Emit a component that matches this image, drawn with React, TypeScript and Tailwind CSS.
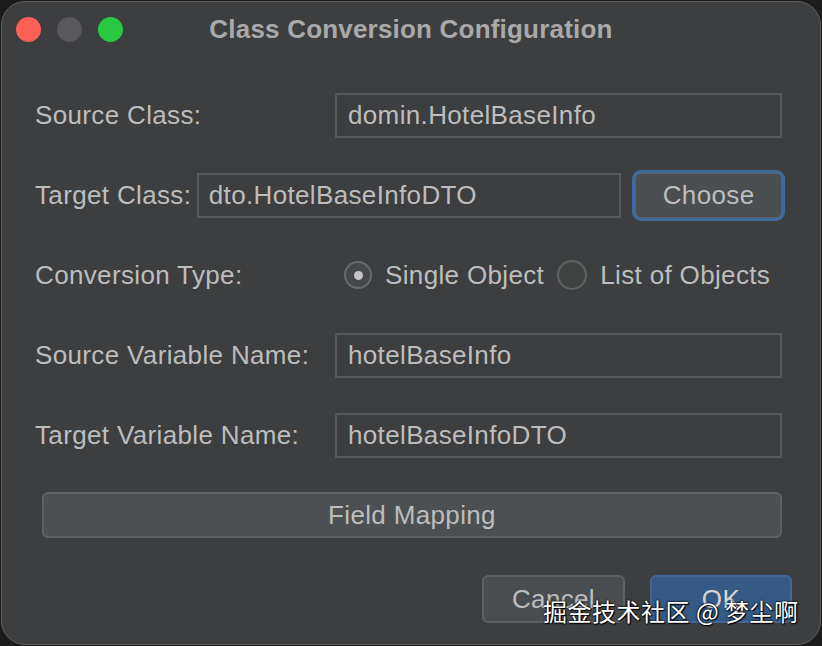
export default function App() {
  const font = { fontFamily: '"Liberation Sans", Arial, sans-serif' };
  return (
    <div className="w-[822px] h-[646px] bg-[#1c1c1d] pt-[1px] pl-[1px]" style={font}>
      <div className="relative w-[820px] h-[644px] rounded-[24px] border border-[#5d5e60] bg-[#3d3e40] text-[#bdbdbd] text-[26px] tracking-[0.35px] overflow-hidden">
        {/* Title bar */}
        <div className="relative h-[54px] flex items-center">
          <div className="flex items-center gap-[16px] pl-[14px]">
            <span className="w-[25px] h-[25px] rounded-full bg-[#fe5f57]" />
            <span className="w-[25px] h-[25px] rounded-full bg-[#59595b]" />
            <span className="w-[25px] h-[25px] rounded-full bg-[#28c840]" />
          </div>
          <div className="absolute inset-0 flex items-center justify-center font-bold text-[26px] tracking-[0.2px] text-[#a9a9a9]">
            Class Conversion Configuration
          </div>
        </div>

        <div className="pt-[19px] pl-[33px] pr-[38px]">
          {/* Source class */}
          <div className="h-[80px] flex items-center">
            <div className="w-[300px]">Source Class:</div>
            <div className="flex-1 h-[45px] border-2 border-[#58595b] flex items-center px-[11px]">domin.HotelBaseInfo</div>
          </div>

          {/* Target class */}
          <div className="h-[80px] flex items-center">
            <div className="w-[162px]">Target Class:</div>
            <div className="w-[425px] h-[45px] border-2 border-[#58595b] flex items-center px-[10px]">dto.HotelBaseInfoDTO</div>
            <button className="ml-[14px] w-[147px] h-[45px] rounded-[6px] bg-[#4b4e51] border border-[#5f6265] ring-[3px] ring-[#3f6b9c] flex items-center justify-center text-[#bdbdbd]">
              Choose
            </button>
          </div>

          {/* Conversion type */}
          <div className="h-[80px] flex items-center">
            <div className="w-[309px]">Conversion Type:</div>
            <div className="flex items-center">
              <span className="w-[28px] h-[28px] rounded-full border-2 border-[#67696b] bg-[#45474a] flex items-center justify-center">
                <span className="w-[9px] h-[9px] rounded-full bg-[#c4c4c4]" />
              </span>
              <span className="ml-[13px]">Single Object</span>
              <span className="ml-[13px] w-[30px] h-[30px] rounded-full border-2 border-[#606264] bg-[#3f4443]" />
              <span className="ml-[13px]">List of Objects</span>
            </div>
          </div>

          {/* Source variable */}
          <div className="h-[80px] flex items-center">
            <div className="w-[300px]">Source Variable Name:</div>
            <div className="flex-1 h-[45px] border-2 border-[#58595b] flex items-center px-[11px]">hotelBaseInfo</div>
          </div>

          {/* Target variable */}
          <div className="h-[80px] flex items-center">
            <div className="w-[300px]">Target Variable Name:</div>
            <div className="flex-1 h-[45px] border-2 border-[#58595b] flex items-center px-[11px]">hotelBaseInfoDTO</div>
          </div>

          {/* Field mapping */}
          <div className="h-[80px] flex items-center pl-[7px]">
            <button className="flex-1 h-[46px] rounded-[6px] bg-[#4d5052] border-2 border-[#5f6264] flex items-center justify-center text-[#bdbdbd]">
              Field Mapping
            </button>
          </div>
        </div>

        {/* Footer buttons */}
        <div className="flex justify-end gap-[25px] pr-[28px] pt-[20px]">
          <button className="w-[143px] h-[48px] rounded-[6px] bg-[#4a4d50] border-2 border-[#5d6062] flex items-center justify-center text-[#bdbdbd]">
            Cancel
          </button>
          <button className="w-[142px] h-[48px] rounded-[6px] bg-[#365a86] border-2 border-[#40669a] flex items-center justify-center text-[#d6d6d6]">
            OK
          </button>
        </div>

        {/* Watermark overlay */}
        <div
          className="absolute left-[541px] top-[597px] text-[24px] tracking-[0.5px] text-white leading-none whitespace-nowrap [text-shadow:0_0_2px_#000,0_0_2px_#000,1px_1px_1px_#000]"
          style={{ fontFamily: '"Noto Sans CJK SC", "Liberation Sans", sans-serif' }}
        >
          掘金技术社区 @ 梦尘啊
        </div>
      </div>
    </div>
  );
}
